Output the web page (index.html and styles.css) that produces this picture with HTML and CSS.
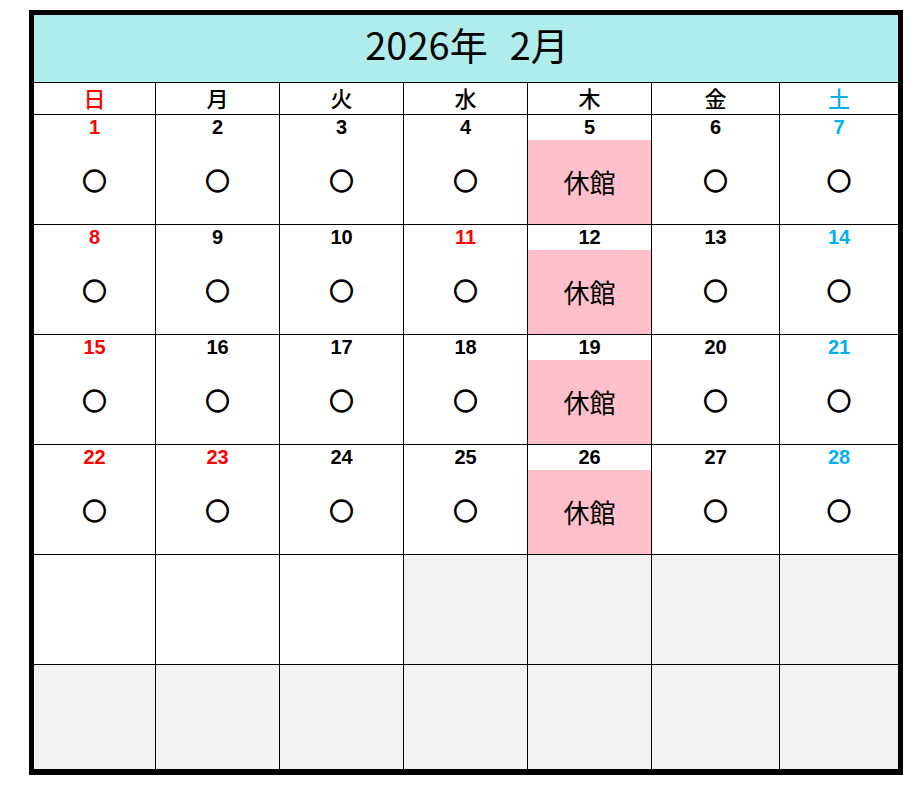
FILE: index.html
```html
<!DOCTYPE html>
<html lang="ja">
<head>
<meta charset="utf-8">
<title>2026年 2月</title>
<link rel="stylesheet" href="styles.css">
</head>
<body>
<div class="calendar">
  <div class="title"><span>2026年</span><span class="month">2月</span></div>

  <div class="wd sun">日</div>
  <div class="wd">月</div>
  <div class="wd">火</div>
  <div class="wd">水</div>
  <div class="wd">木</div>
  <div class="wd">金</div>
  <div class="wd sat">土</div>

  <div class="day first"><div class="num red">1</div><div class="mark">○</div></div>
  <div class="day"><div class="num">2</div><div class="mark">○</div></div>
  <div class="day"><div class="num">3</div><div class="mark">○</div></div>
  <div class="day"><div class="num">4</div><div class="mark">○</div></div>
  <div class="day"><div class="num">5</div><div class="mark closed">休館</div></div>
  <div class="day"><div class="num">6</div><div class="mark">○</div></div>
  <div class="day"><div class="num blue">7</div><div class="mark">○</div></div>

  <div class="day first"><div class="num red">8</div><div class="mark">○</div></div>
  <div class="day"><div class="num">9</div><div class="mark">○</div></div>
  <div class="day"><div class="num">10</div><div class="mark">○</div></div>
  <div class="day"><div class="num red">11</div><div class="mark">○</div></div>
  <div class="day"><div class="num">12</div><div class="mark closed">休館</div></div>
  <div class="day"><div class="num">13</div><div class="mark">○</div></div>
  <div class="day"><div class="num blue">14</div><div class="mark">○</div></div>

  <div class="day first"><div class="num red">15</div><div class="mark">○</div></div>
  <div class="day"><div class="num">16</div><div class="mark">○</div></div>
  <div class="day"><div class="num">17</div><div class="mark">○</div></div>
  <div class="day"><div class="num">18</div><div class="mark">○</div></div>
  <div class="day"><div class="num">19</div><div class="mark closed">休館</div></div>
  <div class="day"><div class="num">20</div><div class="mark">○</div></div>
  <div class="day"><div class="num blue">21</div><div class="mark">○</div></div>

  <div class="day first"><div class="num red">22</div><div class="mark">○</div></div>
  <div class="day"><div class="num red">23</div><div class="mark">○</div></div>
  <div class="day"><div class="num">24</div><div class="mark">○</div></div>
  <div class="day"><div class="num">25</div><div class="mark">○</div></div>
  <div class="day"><div class="num">26</div><div class="mark closed">休館</div></div>
  <div class="day"><div class="num">27</div><div class="mark">○</div></div>
  <div class="day"><div class="num blue">28</div><div class="mark">○</div></div>

  <div class="day first"></div>
  <div class="day"></div>
  <div class="day"></div>
  <div class="day empty"></div>
  <div class="day empty"></div>
  <div class="day empty"></div>
  <div class="day empty"></div>

  <div class="day first empty"></div>
  <div class="day empty"></div>
  <div class="day empty"></div>
  <div class="day empty"></div>
  <div class="day empty"></div>
  <div class="day empty"></div>
  <div class="day empty"></div>
</div>
</body>
</html>
```

FILE: styles.css
```css
html, body {
  margin: 0;
  padding: 0;
  background: #ffffff;
}

body {
  padding: 10px 0 0 29px;
  font-family: "Noto Sans CJK JP", "Noto Sans", sans-serif;
  color: #000;
}

.calendar {
  width: 864px;
  height: 754px;
  border-style: solid;
  border-color: #000;
  border-width: 5px 5px 6px 5px;
  display: grid;
  grid-template-columns: 121px 124px 124px 124px 124px 128px 119px;
  grid-template-rows: 67px 32px 110px 110px 110px 110px 110px 105px;
}

.title {
  grid-column: 1 / 8;
  background: #afeded;
  display: flex;
  justify-content: center;
  align-items: center;
  padding: 0 0 10px 2px;
  box-sizing: border-box;
  font-size: 38px;
  line-height: 1;
}

.title .month {
  margin-left: 22px;
}

.wd {
  border-top: 1px solid #000;
  border-left: 1px solid #000;
  box-sizing: border-box;
  display: flex;
  justify-content: center;
  align-items: center;
  padding-bottom: 3px;
  font-size: 22px;
  font-weight: 500;
  line-height: 1;
}

.wd.sun {
  border-left: none;
}

.day {
  border-top: 1px solid #000;
  border-left: 1px solid #000;
  box-sizing: border-box;
  display: flex;
  flex-direction: column;
  background: #fff;
}

.day.first {
  border-left: none;
}

.day.empty {
  background: #f2f2f2;
}

.num {
  height: 25px;
  line-height: 25px;
  text-align: center;
  font-family: "Liberation Sans", Arial, sans-serif;
  font-weight: bold;
  font-size: 20px;
}

.red {
  color: #ff0000;
}

.blue,
.sat {
  color: #00b0f0;
}

.sun {
  color: #ff0000;
}

.mark {
  flex: 1;
  display: flex;
  justify-content: center;
  align-items: center;
  padding-bottom: 4px;
  font-size: 24px;
  font-weight: bold;
  line-height: 1;
  -webkit-text-stroke: 1.3px #000;
}

.mark.closed {
  background: #ffc0cb;
  padding-bottom: 1px;
  font-weight: normal;
  font-size: 26px;
  -webkit-text-stroke: 0;
}
```
